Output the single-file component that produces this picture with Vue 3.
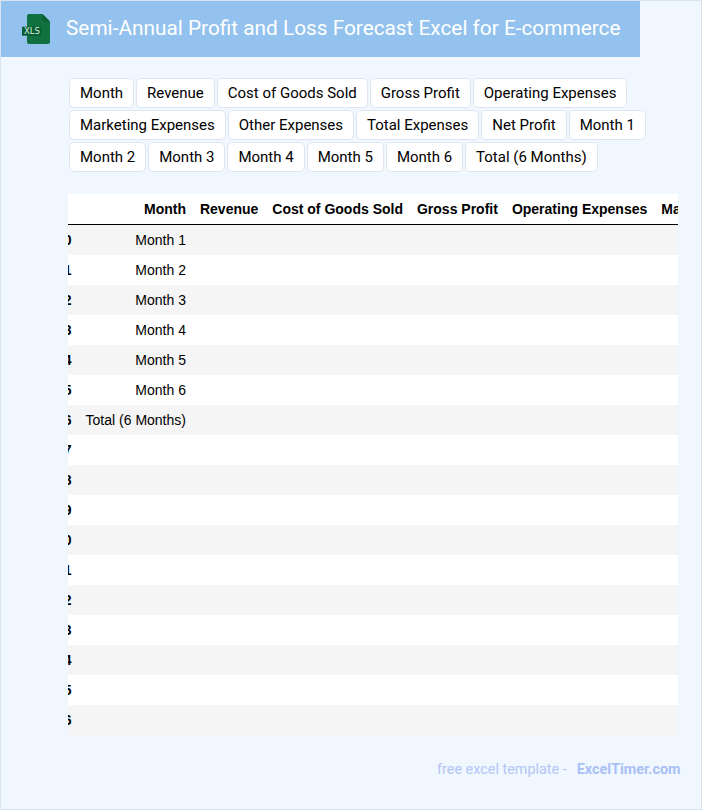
<script setup>
import { ref, onMounted } from 'vue'
const tags = ['Month','Revenue','Cost of Goods Sold','Gross Profit','Operating Expenses','Marketing Expenses','Other Expenses','Total Expenses','Net Profit','Month 1','Month 2','Month 3','Month 4','Month 5','Month 6','Total (6 Months)']
const names = ['Month 1','Month 2','Month 3','Month 4','Month 5','Month 6','Total (6 Months)']
const rows = Array.from({ length: 17 }, (_, i) => ({ id: i, month: names[i] || '' }))
const wrap = ref(null)
onMounted(() => { wrap.value.scrollLeft = 19 })
</script>

<template>
  <div class="page">
    <header class="banner">
      <svg class="logo" width="32" height="32" viewBox="0 0 32 32">
        <path d="M8 1h13.5L29 8.5V29a2 2 0 0 1-2 2H8a2 2 0 0 1-2-2V3a2 2 0 0 1 2-2z" fill="#107040"/>
        <path d="M21.5 1L29 8.5h-5.5a2 2 0 0 1-2-2z" fill="#0c5f35"/>
        <rect x="1" y="13.7" width="19" height="9" fill="#0b5c33"/>
        <text x="11" y="21" class="logo-text" text-anchor="middle">XLS</text>
      </svg>
      <h1 class="title">Semi-Annual Profit and Loss Forecast Excel for E-commerce</h1>
    </header>

    <div class="tags">
      <span v-for="t in tags" :key="t" class="tag">{{ t }}</span>
    </div>

    <div ref="wrap" class="table-wrap">
      <table class="sheet">
        <thead>
          <tr>
            <th></th>
            <th v-for="t in tags" :key="t">{{ t }}</th>
          </tr>
        </thead>
        <tbody>
          <tr v-for="r in rows" :key="r.id">
            <th>{{ r.id }}</th>
            <td>{{ r.month }}</td>
            <td v-for="n in 15" :key="n"></td>
          </tr>
        </tbody>
      </table>
    </div>

    <footer class="foot">
      <span>free excel template -</span>
      <b class="brand">ExcelTimer.com</b>
    </footer>
  </div>
</template>

<style>
html, body { margin: 0; background: #f0f7ff; }
</style>

<style scoped>
.page {
  box-sizing: border-box;
  width: 702px;
  height: 810px;
  border: 1px solid #d8e4f0;
  background: #f0f7ff;
  font-family: Roboto, sans-serif;
}
.banner {
  display: flex;
  align-items: center;
  width: 639px;
  height: 56px;
  background: #93c2ee;
}
.logo { margin-left: 20px; flex: none; }
.logo-text {
  font: 400 8.5px "DejaVu Sans", sans-serif;
  fill: #d7efe0;
}
.title {
  margin: 0 0 3px 13px;
  font-size: 20.8px;
  font-weight: 400;
  color: #fff;
  white-space: nowrap;
}
.tags {
  display: flex;
  flex-wrap: wrap;
  gap: 2px 1.96px;
  width: 609px;
  margin: 21px 0 0 68px;
}
.tag {
  box-sizing: border-box;
  height: 30px;
  padding: 0 10px;
  border: 1px solid #dde6f0;
  border-radius: 5px;
  background: #fff;
  color: #000;
  font-size: 15px;
  line-height: 28px;
  white-space: nowrap;
}
.table-wrap {
  width: 610px;
  margin: 22px 0 0 67px;
  overflow: hidden;
  background: #fff;
}
.sheet {
  border-collapse: separate;
  border-spacing: 0;
  font: 14px Arial, "Liberation Sans", sans-serif;
  color: #000;
}
.sheet th, .sheet td {
  height: 30px;
  box-sizing: border-box;
  padding: 0 7px;
  text-align: right;
  white-space: nowrap;
}
.sheet th { font-weight: 700; }
.sheet thead th { height: 31px; border-bottom: 1px solid #000; }
.sheet tbody tr:nth-child(odd) { background: #f5f5f5; }
.foot {
  display: flex;
  justify-content: flex-end;
  gap: 10px;
  margin: 26px 20.5px 0 0;
  font-size: 14.4px;
  line-height: 18px;
  color: #b3c6f5;
}
.brand { font-weight: 700; color: #a9c0f5; }
</style>
